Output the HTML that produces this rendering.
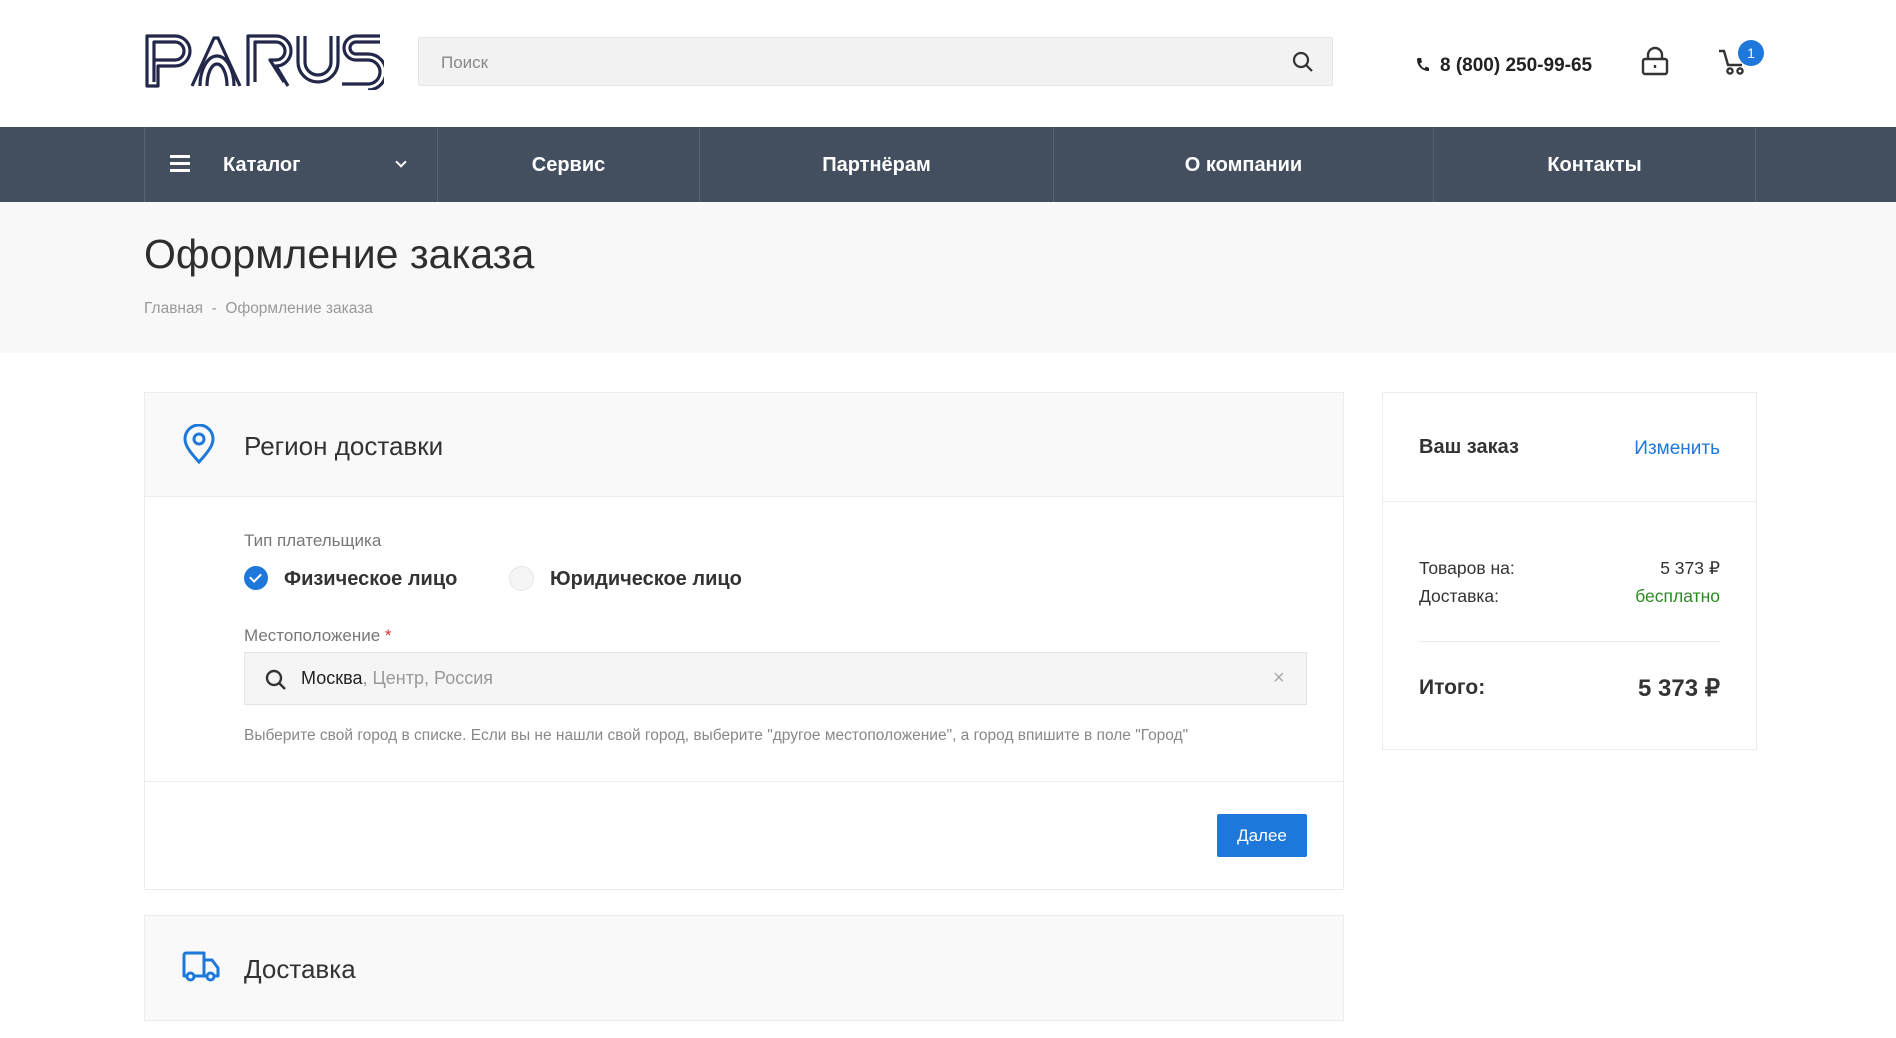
<!DOCTYPE html>
<html><head><meta charset="utf-8"><style>
*{box-sizing:border-box;margin:0;padding:0}
body{width:1896px;height:1038px;overflow:hidden;background:#fff;font-family:"Liberation Sans",sans-serif;color:#333;position:relative}
.a{position:absolute}
.nav{top:127px;left:0;width:1896px;height:75px;background:#434e5f}
.nav .it{position:absolute;top:0;height:75px;border-left:1px solid #576174;color:#fff;font-weight:bold;font-size:20px;line-height:77px;text-align:center}
.band{top:202px;left:0;width:1896px;height:151px;background:#f8f8f8}
.panel{border:1px solid #ececec;background:#fff}
</style></head><body>
<div class="a" style="left:144px;top:30px;width:240px;height:60px">
<svg width="240" height="60" viewBox="0 0 240 60" fill="none" stroke="#23284a" stroke-width="3.2" stroke-linejoin="round">
<path d="M3 56V6h28a15 15 0 0 1 0 30H14v20z"/><path d="M10 52V12h21a9 9 0 0 1 0 18H10"/>
<path d="M48 56L70 8h4l22 48"/><path d="M56 56a17 30 0 0 1 34 0"/><path d="M63 56a10 22 0 0 1 20 0"/>
<path d="M104 56V6h28a15 15 0 0 1 0 30l12 20"/><path d="M111 52V12h21a9 9 0 0 1 0 18h-6l14 22"/>
<path d="M154 6v26a20 20 0 0 0 40 0V6"/><path d="M161 6v26a13 13 0 0 0 26 0V6"/>
<path d="M236 6h-24a12 12 0 0 0 0 24h12a12 12 0 0 1 0 24h-26"/><path d="M236 12h-24a6 6 0 0 0 0 12h12a18 18 0 0 1 0 36"/>
</svg></div>
<div class="a" style="left:418px;top:37px;width:915px;height:49px;background:#f2f2f2;border:1px solid #e6e6e6;border-radius:2px;font-size:17px;color:#888;line-height:49px;padding-left:22px">Поиск</div>
<svg class="a" style="left:1292px;top:51px" width="22" height="22" viewBox="0 0 22 22" fill="none" stroke="#333" stroke-width="2.2"><circle cx="9" cy="9" r="7"/><path d="M14 14l6 6"/></svg>
<svg class="a" style="left:1416px;top:57px" width="13" height="15" viewBox="0 0 13 15"><path d="M2 1l3 0 1 4-2 1.5c1 2.5 2.5 4 4.5 5L10 9.5l3 1.5v3c-7 0-12-5-12-12z" fill="#222"/></svg>
<div class="a" style="left:1440px;top:55px;font-size:19px;font-weight:bold;color:#222">8 (800) 250-99-65</div>
<svg class="a" style="left:1641px;top:46px" width="28" height="30" viewBox="0 0 28 30" fill="none" stroke="#333" stroke-width="2.4"><rect x="2" y="13" width="24" height="15" rx="2"/><path d="M7 13V9a7 7 0 0 1 14 0v4"/><path d="M14 19v3"/></svg>
<svg class="a" style="left:1718px;top:48px" width="30" height="28" viewBox="0 0 30 28" fill="none" stroke="#333" stroke-width="2.4"><path d="M1 3h5l4 14h14"/><circle cx="12" cy="23" r="2.6"/><circle cx="22" cy="23" r="2.6"/></svg>
<div class="a" style="left:1738px;top:40px;width:26px;height:26px;border-radius:50%;background:#1e78d9;color:#fff;font-size:14px;text-align:center;line-height:26px">1</div>
<div class="a nav">
<div class="it" style="left:144px;width:293px;text-align:left;padding-left:78px">Каталог
<span style="position:absolute;left:25px;top:28px;width:20px;height:3px;background:#fff;box-shadow:0 7px 0 #fff,0 14px 0 #fff"></span>
<span style="position:absolute;left:252px;top:31px;width:8px;height:8px;border-right:2.5px solid #fff;border-bottom:2.5px solid #fff;transform:rotate(45deg)"></span></div>
<div class="it" style="left:437px;width:262px">Сервис</div>
<div class="it" style="left:699px;width:354px">Партнёрам</div>
<div class="it" style="left:1053px;width:380px">О компании</div>
<div class="it" style="left:1433px;width:323px;border-right:1px solid #576174">Контакты</div>
</div>
<div class="a band">
<div class="a" style="left:144px;top:29px;font-size:41px;color:#2e2e2e">Оформление заказа</div>
<div class="a" style="left:144px;top:98px;font-size:15.5px;color:#999">Главная &nbsp;-&nbsp; Оформление заказа</div>
</div>
<div class="a panel" style="left:144px;top:392px;width:1200px;height:498px">
<div style="height:104px;background:#f9f9f9;border-bottom:1px solid #ececec;position:relative">
<svg class="a" style="left:38px;top:31px" width="32" height="40" viewBox="0 0 32 40" fill="none" stroke="#1e78d9" stroke-width="3"><path d="M16 38C6 27 2 21 2 15a14 14 0 0 1 28 0c0 6-4 12-14 23z"/><circle cx="16" cy="15" r="5"/></svg>
<div class="a" style="left:99px;top:38px;font-size:26px;color:#333">Регион доставки</div>
</div>
<div class="a" style="left:99px;top:138px;font-size:17px;color:#777">Тип плательщика</div>
<div class="a" style="left:99px;top:173px;width:24px;height:24px;border-radius:50%;background:#1e78d9"><div style="position:absolute;left:8px;top:5px;width:7px;height:11px;border-right:2.5px solid #fff;border-bottom:2.5px solid #fff;transform:rotate(45deg)"></div></div>
<div class="a" style="left:139px;top:175px;font-size:20px;font-weight:bold;color:#333">Физическое лицо</div>
<div class="a" style="left:364px;top:173px;width:25px;height:25px;border-radius:50%;background:#f5f5f5;border:1px solid #e6e6e6"></div>
<div class="a" style="left:405px;top:175px;font-size:20px;font-weight:bold;color:#333">Юридическое лицо</div>
<div class="a" style="left:99px;top:233px;font-size:17px;color:#777">Местоположение <span style="color:#d33">*</span></div>
<div class="a" style="left:99px;top:259px;width:1063px;height:53px;background:#f5f5f5;border:1px solid #e4e4e4">
<svg class="a" style="left:20px;top:16px" width="22" height="22" viewBox="0 0 22 22" fill="none" stroke="#333" stroke-width="2.4"><circle cx="9" cy="9" r="7"/><path d="M14 14l6 6"/></svg>
<div class="a" style="left:56px;top:15px;font-size:18px;color:#222">Москва<span style="color:#999">, Центр, Россия</span></div>
<div class="a" style="left:1028px;top:14px;font-size:20px;color:#aaa">×</div>
</div>
<div class="a" style="left:99px;top:334px;font-size:15.5px;color:#888">Выберите свой город в списке. Если вы не нашли свой город, выберите "другое местоположение", а город впишите в поле "Город"</div>
<div class="a" style="left:0;top:388px;width:1198px;border-top:1px solid #ececec"></div>
<div class="a" style="left:1072px;top:421px;width:90px;height:43px;background:#1e78d9;color:#fff;font-size:17px;text-align:center;line-height:43px;border-radius:2px">Далее</div>
</div>
<div class="a panel" style="left:144px;top:915px;width:1200px;height:106px;background:#f9f9f9">
<svg class="a" style="left:36px;top:35px" width="40" height="32" viewBox="0 0 40 32" fill="none" stroke="#1e78d9" stroke-width="3" stroke-linejoin="round"><path d="M6 25H3V4a2 2 0 0 1 2-2h18v23H13"/><path d="M23 9h8l6 8v8h-4M23 25h3"/><circle cx="9.5" cy="25.5" r="3.5"/><circle cx="29.5" cy="25.5" r="3.5"/></svg>
<div class="a" style="left:99px;top:38px;font-size:26px;color:#333">Доставка</div>
</div>
<div class="a panel" style="left:1382px;top:392px;width:375px;height:358px">
<div style="height:109px;border-bottom:1px solid #ececec;position:relative">
<div class="a" style="left:36px;top:43px;font-size:20px;font-weight:bold;color:#333">Ваш заказ</div>
<div class="a" style="right:36px;top:45px;font-size:19px;color:#1e78d9">Изменить</div>
</div>
<div class="a" style="left:36px;top:165px;font-size:17.5px;color:#333">Товаров на:</div>
<div class="a" style="right:36px;top:165px;font-size:17.5px;color:#333">5 373 ₽</div>
<div class="a" style="left:36px;top:193px;font-size:17.5px;color:#333">Доставка:</div>
<div class="a" style="right:36px;top:193px;font-size:17.5px;color:#2a8a22">бесплатно</div>
<div class="a" style="left:36px;top:248px;width:302px;border-top:1px solid #ececec"></div>
<div class="a" style="left:36px;top:283px;font-size:21px;font-weight:bold;color:#333">Итого:</div>
<div class="a" style="right:36px;top:281px;font-size:24px;font-weight:bold;color:#333">5 373 ₽</div>
</div>
</body></html>
